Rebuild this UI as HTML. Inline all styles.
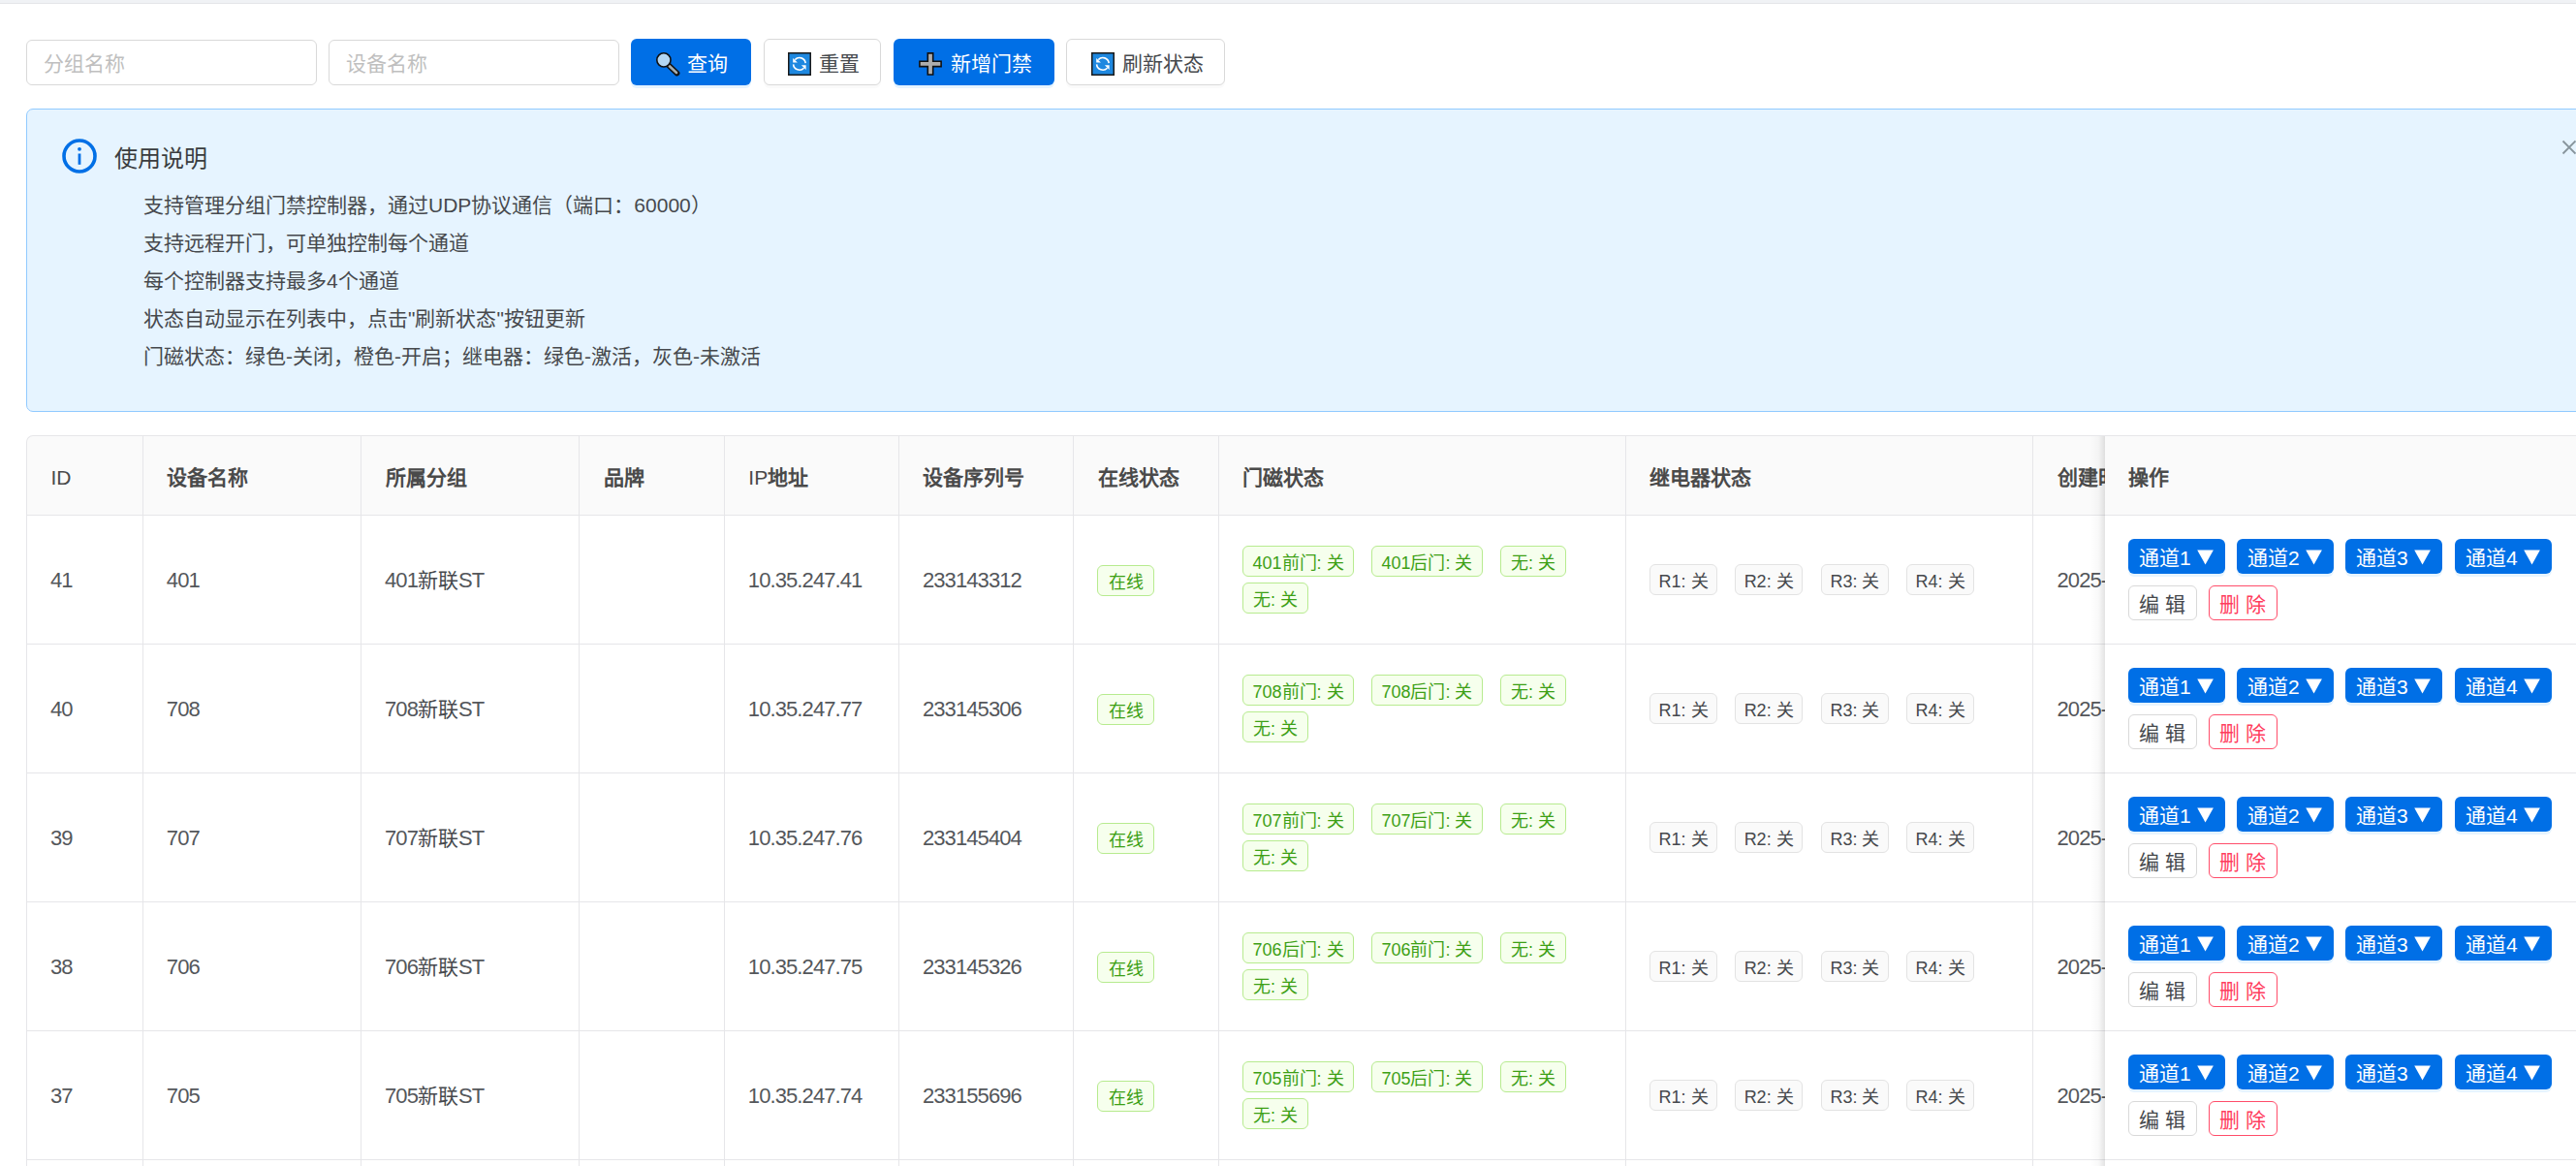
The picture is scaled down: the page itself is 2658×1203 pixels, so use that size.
<!DOCTYPE html><html lang="zh-CN"><head><meta charset="utf-8"><style>
*{margin:0;padding:0;box-sizing:border-box}
html,body{width:2658px;height:1203px;overflow:hidden;background:#fff;font-family:"Liberation Sans",sans-serif;position:relative}
.a{position:absolute}
.t{position:absolute;white-space:nowrap}
.btn{position:absolute;height:48px;border-radius:6px}
.pri{background:#006fe6;box-shadow:0 3px 0 rgba(5,145,255,0.1)}
.def{background:#fff;border:1.5px solid #d9d9d9;box-shadow:0 3px 0 rgba(0,0,0,0.02)}
.tag{position:absolute;height:32px;border-radius:6px;font-size:18px;line-height:29px;padding-top:3px;text-align:center;white-space:nowrap}
.gt{background:#f6ffed;border:1.5px solid #b7eb8f;color:#3da015}
.rt{background:#fafafa;border:1.5px solid #e3e3e3;color:#46494d}
.sb{position:absolute;height:36px;border-radius:6px;font-size:21px;line-height:34px;white-space:nowrap}
.l{font-size:22px;letter-spacing:-0.9px;color:#54575b}
.hl{position:absolute;height:1px;background:#e6e6e9}
.vl{position:absolute;width:1px;background:#e6e6e9}
</style></head><body><div class="a" style="left:0;top:0;width:2658px;height:3px;background:#f0f2f5"></div>
<div class="a" style="left:0;top:3px;width:2658px;height:1px;background:#e4e5e8"></div>
<div class="a" style="left:27px;top:41px;width:300px;height:47px;border:1.5px solid #d9d9d9;border-radius:6px;background:#fff"></div>
<div class="t" style="left:45px;top:55px;font-size:21px;line-height:21px;color:#bfbfbf;font-weight:normal;">分组名称</div>
<div class="a" style="left:339px;top:41px;width:300px;height:47px;border:1.5px solid #d9d9d9;border-radius:6px;background:#fff"></div>
<div class="t" style="left:357px;top:55px;font-size:21px;line-height:21px;color:#bfbfbf;font-weight:normal;">设备名称</div>
<div class="btn pri" style="left:651px;top:40px;width:124px"></div>
<div class="a" style="left:676px;top:54px;width:26px;height:26px"><svg width="26" height="26" viewBox="0 0 26 26"><line x1="14.2" y1="13.6" x2="22.6" y2="21.6" stroke="#111" stroke-width="5.6" stroke-linecap="round"/><line x1="14.8" y1="14.2" x2="22" y2="21" stroke="#a5adb0" stroke-width="2.6" stroke-linecap="round"/><circle cx="8.9" cy="7.9" r="7.1" fill="#b3d6f3" stroke="#111" stroke-width="1.6"/></svg></div>
<div class="t" style="left:709px;top:55px;font-size:21px;line-height:21px;color:#fff;font-weight:normal;">查询</div>
<div class="btn def" style="left:788px;top:40px;width:121px"></div>
<div class="a" style="left:812.5px;top:54px;width:26px;height:26px"><svg width="24" height="24" viewBox="0 0 24 24"><rect x="0.75" y="0.75" width="22.5" height="22.5" fill="#1e88e0" stroke="#1a1a1a" stroke-width="1.5"/><path d="M18.2 11.2 A6.3 6.3 0 0 0 7.3 7.6" fill="none" stroke="#fff" stroke-width="1.6"/><path d="M5.2 5.9 L5.2 10.6 L9.9 10.6 Z" fill="#fff"/><path d="M5.6 12.4 A6.3 6.3 0 0 0 16.5 16.2" fill="none" stroke="#fff" stroke-width="1.6"/><path d="M18.6 18.0 L18.6 13.3 L13.9 13.3 Z" fill="#fff"/></svg></div>
<div class="t" style="left:845px;top:55px;font-size:21px;line-height:21px;color:#46494d;font-weight:normal;">重置</div>
<div class="btn pri" style="left:922px;top:40px;width:166px"></div>
<div class="a" style="left:948px;top:54px;width:26px;height:26px"><svg width="24" height="24" viewBox="0 0 24 24"><path d="M9.3 0.9 H14.7 V9.2 H23.1 V14.6 H14.7 V23 H9.3 V14.6 H0.9 V9.2 H9.3 Z" fill="#adadad" stroke="#111" stroke-width="1.6"/></svg></div>
<div class="t" style="left:981px;top:55px;font-size:21px;line-height:21px;color:#fff;font-weight:normal;">新增门禁</div>
<div class="btn def" style="left:1100px;top:40px;width:164px"></div>
<div class="a" style="left:1125.5px;top:54px;width:26px;height:26px"><svg width="24" height="24" viewBox="0 0 24 24"><rect x="0.75" y="0.75" width="22.5" height="22.5" fill="#1e88e0" stroke="#1a1a1a" stroke-width="1.5"/><path d="M18.2 11.2 A6.3 6.3 0 0 0 7.3 7.6" fill="none" stroke="#fff" stroke-width="1.6"/><path d="M5.2 5.9 L5.2 10.6 L9.9 10.6 Z" fill="#fff"/><path d="M5.6 12.4 A6.3 6.3 0 0 0 16.5 16.2" fill="none" stroke="#fff" stroke-width="1.6"/><path d="M18.6 18.0 L18.6 13.3 L13.9 13.3 Z" fill="#fff"/></svg></div>
<div class="t" style="left:1158px;top:55px;font-size:21px;line-height:21px;color:#46494d;font-weight:normal;">刷新状态</div>
<div class="a" style="left:27px;top:112px;width:2700px;height:313px;background:#e6f4ff;border:1.5px solid #91caff;border-radius:7px"></div>
<div class="a" style="left:63px;top:142px;width:38px;height:38px"><svg width="38" height="38" viewBox="0 0 38 38"><circle cx="19" cy="19" r="16" fill="none" stroke="#006fe6" stroke-width="3.6"/><circle cx="19" cy="11.8" r="1.9" fill="#006fe6"/><rect x="17.6" y="16.5" width="2.8" height="11.3" fill="#006fe6"/></svg></div>
<div class="t" style="left:118px;top:152px;font-size:24px;line-height:24px;color:#3a3d40;font-weight:normal;">使用说明</div>
<div class="t" style="left:148px;top:201px;font-size:21px;line-height:21px;color:#46494d;font-weight:normal;">支持管理分组门禁控制器，通过UDP协议通信（端口：60000）</div>
<div class="t" style="left:148px;top:240px;font-size:21px;line-height:21px;color:#46494d;font-weight:normal;">支持远程开门，可单独控制每个通道</div>
<div class="t" style="left:148px;top:279px;font-size:21px;line-height:21px;color:#46494d;font-weight:normal;">每个控制器支持最多4个通道</div>
<div class="t" style="left:148px;top:318px;font-size:21px;line-height:21px;color:#46494d;font-weight:normal;">状态自动显示在列表中，点击"刷新状态"按钮更新</div>
<div class="t" style="left:148px;top:357px;font-size:21px;line-height:21px;color:#46494d;font-weight:normal;">门磁状态：绿色-关闭，橙色-开启；继电器：绿色-激活，灰色-未激活</div>
<div class="a" style="left:2641px;top:142px;width:20px;height:20px"><svg width="20" height="20" viewBox="0 0 20 20"><path d="M3.5 3.5 L16.5 16.5 M16.5 3.5 L3.5 16.5" stroke="#87949c" stroke-width="1.8"/></svg></div>
<div class="a" style="left:27px;top:449px;width:2700px;height:82px;background:#fafafa;border-top-left-radius:7px;border-top:1px solid #e6e6e9;border-left:1px solid #e6e6e9"></div>
<div class="vl" style="left:27px;top:460px;height:800px"></div>
<div class="vl" style="left:147px;top:449px;height:800px"></div>
<div class="vl" style="left:372px;top:449px;height:800px"></div>
<div class="vl" style="left:597px;top:449px;height:800px"></div>
<div class="vl" style="left:747px;top:449px;height:800px"></div>
<div class="vl" style="left:927px;top:449px;height:800px"></div>
<div class="vl" style="left:1107px;top:449px;height:800px"></div>
<div class="vl" style="left:1257px;top:449px;height:800px"></div>
<div class="vl" style="left:1677px;top:449px;height:800px"></div>
<div class="vl" style="left:2097px;top:449px;height:800px"></div>
<div class="hl" style="left:27px;top:531px;width:2700px"></div>
<div class="hl" style="left:27px;top:664px;width:2700px"></div>
<div class="hl" style="left:27px;top:797px;width:2700px"></div>
<div class="hl" style="left:27px;top:930px;width:2700px"></div>
<div class="hl" style="left:27px;top:1063px;width:2700px"></div>
<div class="hl" style="left:27px;top:1196px;width:2700px"></div>
<div class="t" style="left:52.5px;top:482px;font-size:21px;line-height:21px;color:#4a4a4a;font-weight:normal;">ID</div>
<div class="t" style="left:172.3px;top:482px;font-size:21px;line-height:21px;color:#4a4a4a;font-weight:bold;">设备名称</div>
<div class="t" style="left:397.5px;top:482px;font-size:21px;line-height:21px;color:#4a4a4a;font-weight:bold;">所属分组</div>
<div class="t" style="left:622.5px;top:482px;font-size:21px;line-height:21px;color:#4a4a4a;font-weight:bold;">品牌</div>
<div class="t" style="left:772.3px;top:482px;font-size:21px;line-height:21px;color:#4a4a4a;font-weight:bold;"><span style="font-weight:normal">IP</span>地址</div>
<div class="t" style="left:952.4px;top:482px;font-size:21px;line-height:21px;color:#4a4a4a;font-weight:bold;">设备序列号</div>
<div class="t" style="left:1132.6px;top:482px;font-size:21px;line-height:21px;color:#4a4a4a;font-weight:bold;">在线状态</div>
<div class="t" style="left:1282.4px;top:482px;font-size:21px;line-height:21px;color:#4a4a4a;font-weight:bold;">门磁状态</div>
<div class="t" style="left:1702.3px;top:482px;font-size:21px;line-height:21px;color:#4a4a4a;font-weight:bold;">继电器状态</div>
<div class="t" style="left:2122.5px;top:482px;font-size:21px;line-height:21px;color:#4a4a4a;font-weight:bold;">创建时间</div>
<div class="t" style="left:52.0px;top:587.5px;font-size:21px;line-height:21px;color:#46494d;font-weight:normal;"><span class="l">41</span></div>
<div class="t" style="left:171.8px;top:587.5px;font-size:21px;line-height:21px;color:#46494d;font-weight:normal;"><span class="l">401</span></div>
<div class="t" style="left:397.0px;top:587.5px;font-size:21px;line-height:21px;color:#46494d;font-weight:normal;"><span class="l">401</span>新联<span class="l">ST</span></div>
<div class="t" style="left:771.8px;top:587.5px;font-size:21px;line-height:21px;color:#46494d;font-weight:normal;"><span class="l">10.35.247.41</span></div>
<div class="t" style="left:951.9px;top:587.5px;font-size:21px;line-height:21px;color:#46494d;font-weight:normal;"><span class="l">233143312</span></div>
<div class="t" style="left:2122.5px;top:587.5px;font-size:21px;line-height:21px;color:#46494d;font-weight:normal;"><span class="l">2025-09-18</span> <span class="l">10:23:45</span></div>
<div class="tag gt" style="left:1132px;top:583.2px;width:59px">在线</div>
<div class="tag gt" style="left:1282.3px;top:563.1px;width:114.4px">401前门: 关</div>
<div class="tag gt" style="left:1415.3px;top:563.1px;width:114.3px">401后门: 关</div>
<div class="tag gt" style="left:1548px;top:563.1px;width:68px">无: 关</div>
<div class="tag gt" style="left:1282.3px;top:601.1px;width:67.4px">无: 关</div>
<div class="tag rt" style="left:1702.3px;top:582.2px;width:69.5px">R1: 关</div>
<div class="tag rt" style="left:1790.4px;top:582.2px;width:69.5px">R2: 关</div>
<div class="tag rt" style="left:1879.2px;top:582.2px;width:69.5px">R3: 关</div>
<div class="tag rt" style="left:1967.3px;top:582.2px;width:69.5px">R4: 关</div>
<div class="t" style="left:52.0px;top:720.5px;font-size:21px;line-height:21px;color:#46494d;font-weight:normal;"><span class="l">40</span></div>
<div class="t" style="left:171.8px;top:720.5px;font-size:21px;line-height:21px;color:#46494d;font-weight:normal;"><span class="l">708</span></div>
<div class="t" style="left:397.0px;top:720.5px;font-size:21px;line-height:21px;color:#46494d;font-weight:normal;"><span class="l">708</span>新联<span class="l">ST</span></div>
<div class="t" style="left:771.8px;top:720.5px;font-size:21px;line-height:21px;color:#46494d;font-weight:normal;"><span class="l">10.35.247.77</span></div>
<div class="t" style="left:951.9px;top:720.5px;font-size:21px;line-height:21px;color:#46494d;font-weight:normal;"><span class="l">233145306</span></div>
<div class="t" style="left:2122.5px;top:720.5px;font-size:21px;line-height:21px;color:#46494d;font-weight:normal;"><span class="l">2025-09-18</span> <span class="l">10:23:45</span></div>
<div class="tag gt" style="left:1132px;top:716.2px;width:59px">在线</div>
<div class="tag gt" style="left:1282.3px;top:696.1px;width:114.4px">708前门: 关</div>
<div class="tag gt" style="left:1415.3px;top:696.1px;width:114.3px">708后门: 关</div>
<div class="tag gt" style="left:1548px;top:696.1px;width:68px">无: 关</div>
<div class="tag gt" style="left:1282.3px;top:734.1px;width:67.4px">无: 关</div>
<div class="tag rt" style="left:1702.3px;top:715.2px;width:69.5px">R1: 关</div>
<div class="tag rt" style="left:1790.4px;top:715.2px;width:69.5px">R2: 关</div>
<div class="tag rt" style="left:1879.2px;top:715.2px;width:69.5px">R3: 关</div>
<div class="tag rt" style="left:1967.3px;top:715.2px;width:69.5px">R4: 关</div>
<div class="t" style="left:52.0px;top:853.5px;font-size:21px;line-height:21px;color:#46494d;font-weight:normal;"><span class="l">39</span></div>
<div class="t" style="left:171.8px;top:853.5px;font-size:21px;line-height:21px;color:#46494d;font-weight:normal;"><span class="l">707</span></div>
<div class="t" style="left:397.0px;top:853.5px;font-size:21px;line-height:21px;color:#46494d;font-weight:normal;"><span class="l">707</span>新联<span class="l">ST</span></div>
<div class="t" style="left:771.8px;top:853.5px;font-size:21px;line-height:21px;color:#46494d;font-weight:normal;"><span class="l">10.35.247.76</span></div>
<div class="t" style="left:951.9px;top:853.5px;font-size:21px;line-height:21px;color:#46494d;font-weight:normal;"><span class="l">233145404</span></div>
<div class="t" style="left:2122.5px;top:853.5px;font-size:21px;line-height:21px;color:#46494d;font-weight:normal;"><span class="l">2025-09-18</span> <span class="l">10:23:45</span></div>
<div class="tag gt" style="left:1132px;top:849.2px;width:59px">在线</div>
<div class="tag gt" style="left:1282.3px;top:829.1px;width:114.4px">707前门: 关</div>
<div class="tag gt" style="left:1415.3px;top:829.1px;width:114.3px">707后门: 关</div>
<div class="tag gt" style="left:1548px;top:829.1px;width:68px">无: 关</div>
<div class="tag gt" style="left:1282.3px;top:867.1px;width:67.4px">无: 关</div>
<div class="tag rt" style="left:1702.3px;top:848.2px;width:69.5px">R1: 关</div>
<div class="tag rt" style="left:1790.4px;top:848.2px;width:69.5px">R2: 关</div>
<div class="tag rt" style="left:1879.2px;top:848.2px;width:69.5px">R3: 关</div>
<div class="tag rt" style="left:1967.3px;top:848.2px;width:69.5px">R4: 关</div>
<div class="t" style="left:52.0px;top:986.5px;font-size:21px;line-height:21px;color:#46494d;font-weight:normal;"><span class="l">38</span></div>
<div class="t" style="left:171.8px;top:986.5px;font-size:21px;line-height:21px;color:#46494d;font-weight:normal;"><span class="l">706</span></div>
<div class="t" style="left:397.0px;top:986.5px;font-size:21px;line-height:21px;color:#46494d;font-weight:normal;"><span class="l">706</span>新联<span class="l">ST</span></div>
<div class="t" style="left:771.8px;top:986.5px;font-size:21px;line-height:21px;color:#46494d;font-weight:normal;"><span class="l">10.35.247.75</span></div>
<div class="t" style="left:951.9px;top:986.5px;font-size:21px;line-height:21px;color:#46494d;font-weight:normal;"><span class="l">233145326</span></div>
<div class="t" style="left:2122.5px;top:986.5px;font-size:21px;line-height:21px;color:#46494d;font-weight:normal;"><span class="l">2025-09-18</span> <span class="l">10:23:45</span></div>
<div class="tag gt" style="left:1132px;top:982.2px;width:59px">在线</div>
<div class="tag gt" style="left:1282.3px;top:962.1px;width:114.4px">706后门: 关</div>
<div class="tag gt" style="left:1415.3px;top:962.1px;width:114.3px">706前门: 关</div>
<div class="tag gt" style="left:1548px;top:962.1px;width:68px">无: 关</div>
<div class="tag gt" style="left:1282.3px;top:1000.1px;width:67.4px">无: 关</div>
<div class="tag rt" style="left:1702.3px;top:981.2px;width:69.5px">R1: 关</div>
<div class="tag rt" style="left:1790.4px;top:981.2px;width:69.5px">R2: 关</div>
<div class="tag rt" style="left:1879.2px;top:981.2px;width:69.5px">R3: 关</div>
<div class="tag rt" style="left:1967.3px;top:981.2px;width:69.5px">R4: 关</div>
<div class="t" style="left:52.0px;top:1119.5px;font-size:21px;line-height:21px;color:#46494d;font-weight:normal;"><span class="l">37</span></div>
<div class="t" style="left:171.8px;top:1119.5px;font-size:21px;line-height:21px;color:#46494d;font-weight:normal;"><span class="l">705</span></div>
<div class="t" style="left:397.0px;top:1119.5px;font-size:21px;line-height:21px;color:#46494d;font-weight:normal;"><span class="l">705</span>新联<span class="l">ST</span></div>
<div class="t" style="left:771.8px;top:1119.5px;font-size:21px;line-height:21px;color:#46494d;font-weight:normal;"><span class="l">10.35.247.74</span></div>
<div class="t" style="left:951.9px;top:1119.5px;font-size:21px;line-height:21px;color:#46494d;font-weight:normal;"><span class="l">233155696</span></div>
<div class="t" style="left:2122.5px;top:1119.5px;font-size:21px;line-height:21px;color:#46494d;font-weight:normal;"><span class="l">2025-09-18</span> <span class="l">10:23:45</span></div>
<div class="tag gt" style="left:1132px;top:1115.2px;width:59px">在线</div>
<div class="tag gt" style="left:1282.3px;top:1095.1px;width:114.4px">705前门: 关</div>
<div class="tag gt" style="left:1415.3px;top:1095.1px;width:114.3px">705后门: 关</div>
<div class="tag gt" style="left:1548px;top:1095.1px;width:68px">无: 关</div>
<div class="tag gt" style="left:1282.3px;top:1133.1px;width:67.4px">无: 关</div>
<div class="tag rt" style="left:1702.3px;top:1114.2px;width:69.5px">R1: 关</div>
<div class="tag rt" style="left:1790.4px;top:1114.2px;width:69.5px">R2: 关</div>
<div class="tag rt" style="left:1879.2px;top:1114.2px;width:69.5px">R3: 关</div>
<div class="tag rt" style="left:1967.3px;top:1114.2px;width:69.5px">R4: 关</div>
<div class="a" style="left:2156.5px;top:450px;width:15px;height:800px;background:linear-gradient(to right,rgba(0,0,0,0) 0%,rgba(0,0,0,0.025) 55%,rgba(0,0,0,0.11) 100%)"></div>
<div class="a" style="left:2171.5px;top:449px;width:600px;height:82px;background:#fafafa;border-top:1px solid #e6e6e9"></div>
<div class="a" style="left:2171.5px;top:532px;width:600px;height:700px;background:#fff"></div>
<div class="hl" style="left:2171.5px;top:531px;width:600px"></div>
<div class="hl" style="left:2171.5px;top:664px;width:600px"></div>
<div class="hl" style="left:2171.5px;top:797px;width:600px"></div>
<div class="hl" style="left:2171.5px;top:930px;width:600px"></div>
<div class="hl" style="left:2171.5px;top:1063px;width:600px"></div>
<div class="hl" style="left:2171.5px;top:1196px;width:600px"></div>
<div class="t" style="left:2196px;top:482px;font-size:21px;line-height:21px;color:#4a4a4a;font-weight:bold;">操作</div>
<div class="sb" style="left:2196px;top:556.0px;width:100px;background:#006fe6;color:#fff;box-shadow:0 3px 0 rgba(5,145,255,0.1)"><span class="t" style="left:11px;top:2.5px">通道1</span><svg class="a" style="left:71px;top:10.5px" width="17" height="16" viewBox="0 0 17 16"><path d="M0.2 0.4 H16.9 L8.55 15.4 Z" fill="#fff"/></svg></div>
<div class="sb" style="left:2308px;top:556.0px;width:100px;background:#006fe6;color:#fff;box-shadow:0 3px 0 rgba(5,145,255,0.1)"><span class="t" style="left:11px;top:2.5px">通道2</span><svg class="a" style="left:71px;top:10.5px" width="17" height="16" viewBox="0 0 17 16"><path d="M0.2 0.4 H16.9 L8.55 15.4 Z" fill="#fff"/></svg></div>
<div class="sb" style="left:2420px;top:556.0px;width:100px;background:#006fe6;color:#fff;box-shadow:0 3px 0 rgba(5,145,255,0.1)"><span class="t" style="left:11px;top:2.5px">通道3</span><svg class="a" style="left:71px;top:10.5px" width="17" height="16" viewBox="0 0 17 16"><path d="M0.2 0.4 H16.9 L8.55 15.4 Z" fill="#fff"/></svg></div>
<div class="sb" style="left:2533px;top:556.0px;width:100px;background:#006fe6;color:#fff;box-shadow:0 3px 0 rgba(5,145,255,0.1)"><span class="t" style="left:11px;top:2.5px">通道4</span><svg class="a" style="left:71px;top:10.5px" width="17" height="16" viewBox="0 0 17 16"><path d="M0.2 0.4 H16.9 L8.55 15.4 Z" fill="#fff"/></svg></div>
<div class="sb" style="left:2196px;top:604.2px;width:70.5px;border:1.5px solid #d9d9d9;background:#fff;color:#46494d"><span class="t" style="left:10px;top:1.5px">编 辑</span></div>
<div class="sb" style="left:2279px;top:604.2px;width:70.5px;border:1.5px solid #ff4d6a;background:#fff;color:#ff3d5e"><span class="t" style="left:10px;top:1.5px">删 除</span></div>
<div class="sb" style="left:2196px;top:689.0px;width:100px;background:#006fe6;color:#fff;box-shadow:0 3px 0 rgba(5,145,255,0.1)"><span class="t" style="left:11px;top:2.5px">通道1</span><svg class="a" style="left:71px;top:10.5px" width="17" height="16" viewBox="0 0 17 16"><path d="M0.2 0.4 H16.9 L8.55 15.4 Z" fill="#fff"/></svg></div>
<div class="sb" style="left:2308px;top:689.0px;width:100px;background:#006fe6;color:#fff;box-shadow:0 3px 0 rgba(5,145,255,0.1)"><span class="t" style="left:11px;top:2.5px">通道2</span><svg class="a" style="left:71px;top:10.5px" width="17" height="16" viewBox="0 0 17 16"><path d="M0.2 0.4 H16.9 L8.55 15.4 Z" fill="#fff"/></svg></div>
<div class="sb" style="left:2420px;top:689.0px;width:100px;background:#006fe6;color:#fff;box-shadow:0 3px 0 rgba(5,145,255,0.1)"><span class="t" style="left:11px;top:2.5px">通道3</span><svg class="a" style="left:71px;top:10.5px" width="17" height="16" viewBox="0 0 17 16"><path d="M0.2 0.4 H16.9 L8.55 15.4 Z" fill="#fff"/></svg></div>
<div class="sb" style="left:2533px;top:689.0px;width:100px;background:#006fe6;color:#fff;box-shadow:0 3px 0 rgba(5,145,255,0.1)"><span class="t" style="left:11px;top:2.5px">通道4</span><svg class="a" style="left:71px;top:10.5px" width="17" height="16" viewBox="0 0 17 16"><path d="M0.2 0.4 H16.9 L8.55 15.4 Z" fill="#fff"/></svg></div>
<div class="sb" style="left:2196px;top:737.2px;width:70.5px;border:1.5px solid #d9d9d9;background:#fff;color:#46494d"><span class="t" style="left:10px;top:1.5px">编 辑</span></div>
<div class="sb" style="left:2279px;top:737.2px;width:70.5px;border:1.5px solid #ff4d6a;background:#fff;color:#ff3d5e"><span class="t" style="left:10px;top:1.5px">删 除</span></div>
<div class="sb" style="left:2196px;top:822.0px;width:100px;background:#006fe6;color:#fff;box-shadow:0 3px 0 rgba(5,145,255,0.1)"><span class="t" style="left:11px;top:2.5px">通道1</span><svg class="a" style="left:71px;top:10.5px" width="17" height="16" viewBox="0 0 17 16"><path d="M0.2 0.4 H16.9 L8.55 15.4 Z" fill="#fff"/></svg></div>
<div class="sb" style="left:2308px;top:822.0px;width:100px;background:#006fe6;color:#fff;box-shadow:0 3px 0 rgba(5,145,255,0.1)"><span class="t" style="left:11px;top:2.5px">通道2</span><svg class="a" style="left:71px;top:10.5px" width="17" height="16" viewBox="0 0 17 16"><path d="M0.2 0.4 H16.9 L8.55 15.4 Z" fill="#fff"/></svg></div>
<div class="sb" style="left:2420px;top:822.0px;width:100px;background:#006fe6;color:#fff;box-shadow:0 3px 0 rgba(5,145,255,0.1)"><span class="t" style="left:11px;top:2.5px">通道3</span><svg class="a" style="left:71px;top:10.5px" width="17" height="16" viewBox="0 0 17 16"><path d="M0.2 0.4 H16.9 L8.55 15.4 Z" fill="#fff"/></svg></div>
<div class="sb" style="left:2533px;top:822.0px;width:100px;background:#006fe6;color:#fff;box-shadow:0 3px 0 rgba(5,145,255,0.1)"><span class="t" style="left:11px;top:2.5px">通道4</span><svg class="a" style="left:71px;top:10.5px" width="17" height="16" viewBox="0 0 17 16"><path d="M0.2 0.4 H16.9 L8.55 15.4 Z" fill="#fff"/></svg></div>
<div class="sb" style="left:2196px;top:870.2px;width:70.5px;border:1.5px solid #d9d9d9;background:#fff;color:#46494d"><span class="t" style="left:10px;top:1.5px">编 辑</span></div>
<div class="sb" style="left:2279px;top:870.2px;width:70.5px;border:1.5px solid #ff4d6a;background:#fff;color:#ff3d5e"><span class="t" style="left:10px;top:1.5px">删 除</span></div>
<div class="sb" style="left:2196px;top:955.0px;width:100px;background:#006fe6;color:#fff;box-shadow:0 3px 0 rgba(5,145,255,0.1)"><span class="t" style="left:11px;top:2.5px">通道1</span><svg class="a" style="left:71px;top:10.5px" width="17" height="16" viewBox="0 0 17 16"><path d="M0.2 0.4 H16.9 L8.55 15.4 Z" fill="#fff"/></svg></div>
<div class="sb" style="left:2308px;top:955.0px;width:100px;background:#006fe6;color:#fff;box-shadow:0 3px 0 rgba(5,145,255,0.1)"><span class="t" style="left:11px;top:2.5px">通道2</span><svg class="a" style="left:71px;top:10.5px" width="17" height="16" viewBox="0 0 17 16"><path d="M0.2 0.4 H16.9 L8.55 15.4 Z" fill="#fff"/></svg></div>
<div class="sb" style="left:2420px;top:955.0px;width:100px;background:#006fe6;color:#fff;box-shadow:0 3px 0 rgba(5,145,255,0.1)"><span class="t" style="left:11px;top:2.5px">通道3</span><svg class="a" style="left:71px;top:10.5px" width="17" height="16" viewBox="0 0 17 16"><path d="M0.2 0.4 H16.9 L8.55 15.4 Z" fill="#fff"/></svg></div>
<div class="sb" style="left:2533px;top:955.0px;width:100px;background:#006fe6;color:#fff;box-shadow:0 3px 0 rgba(5,145,255,0.1)"><span class="t" style="left:11px;top:2.5px">通道4</span><svg class="a" style="left:71px;top:10.5px" width="17" height="16" viewBox="0 0 17 16"><path d="M0.2 0.4 H16.9 L8.55 15.4 Z" fill="#fff"/></svg></div>
<div class="sb" style="left:2196px;top:1003.2px;width:70.5px;border:1.5px solid #d9d9d9;background:#fff;color:#46494d"><span class="t" style="left:10px;top:1.5px">编 辑</span></div>
<div class="sb" style="left:2279px;top:1003.2px;width:70.5px;border:1.5px solid #ff4d6a;background:#fff;color:#ff3d5e"><span class="t" style="left:10px;top:1.5px">删 除</span></div>
<div class="sb" style="left:2196px;top:1088.0px;width:100px;background:#006fe6;color:#fff;box-shadow:0 3px 0 rgba(5,145,255,0.1)"><span class="t" style="left:11px;top:2.5px">通道1</span><svg class="a" style="left:71px;top:10.5px" width="17" height="16" viewBox="0 0 17 16"><path d="M0.2 0.4 H16.9 L8.55 15.4 Z" fill="#fff"/></svg></div>
<div class="sb" style="left:2308px;top:1088.0px;width:100px;background:#006fe6;color:#fff;box-shadow:0 3px 0 rgba(5,145,255,0.1)"><span class="t" style="left:11px;top:2.5px">通道2</span><svg class="a" style="left:71px;top:10.5px" width="17" height="16" viewBox="0 0 17 16"><path d="M0.2 0.4 H16.9 L8.55 15.4 Z" fill="#fff"/></svg></div>
<div class="sb" style="left:2420px;top:1088.0px;width:100px;background:#006fe6;color:#fff;box-shadow:0 3px 0 rgba(5,145,255,0.1)"><span class="t" style="left:11px;top:2.5px">通道3</span><svg class="a" style="left:71px;top:10.5px" width="17" height="16" viewBox="0 0 17 16"><path d="M0.2 0.4 H16.9 L8.55 15.4 Z" fill="#fff"/></svg></div>
<div class="sb" style="left:2533px;top:1088.0px;width:100px;background:#006fe6;color:#fff;box-shadow:0 3px 0 rgba(5,145,255,0.1)"><span class="t" style="left:11px;top:2.5px">通道4</span><svg class="a" style="left:71px;top:10.5px" width="17" height="16" viewBox="0 0 17 16"><path d="M0.2 0.4 H16.9 L8.55 15.4 Z" fill="#fff"/></svg></div>
<div class="sb" style="left:2196px;top:1136.2px;width:70.5px;border:1.5px solid #d9d9d9;background:#fff;color:#46494d"><span class="t" style="left:10px;top:1.5px">编 辑</span></div>
<div class="sb" style="left:2279px;top:1136.2px;width:70.5px;border:1.5px solid #ff4d6a;background:#fff;color:#ff3d5e"><span class="t" style="left:10px;top:1.5px">删 除</span></div></body></html>
